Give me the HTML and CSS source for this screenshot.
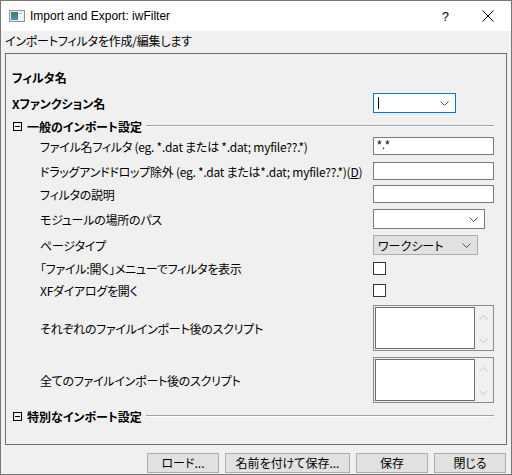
FILE: index.html
```html
<!DOCTYPE html>
<html lang="ja">
<head>
<meta charset="utf-8">
<title>Import and Export: iwFilter</title>
<link rel="stylesheet" href="styles.css">
</head>
<body>
<div class="window">
  <div class="titlebar">
    <svg class="app-icon" width="16" height="12" viewBox="0 0 16 12">
      <defs>
        <linearGradient id="g" x1="0" y1="0" x2="0" y2="1">
          <stop offset="0" stop-color="#2f7f6a"/>
          <stop offset="1" stop-color="#5a8fb5"/>
        </linearGradient>
      </defs>
      <rect x="0.5" y="0.5" width="15" height="11" fill="#e8ecef" stroke="#8c979c"/>
      <rect x="2" y="2" width="7" height="8" fill="url(#g)"/>
      <rect x="10" y="2" width="4" height="8" fill="#f7f9fa"/>
      <rect x="10" y="3" width="3" height="1" fill="#9fb3bf"/>
    </svg>
    <span class="title">Import and Export: iwFilter</span>
    <span class="help">?</span>
    <svg class="close" width="12" height="12" viewBox="0 0 12 12">
      <path d="M0.5 0.5 L11.5 11.5 M11.5 0.5 L0.5 11.5" stroke="#000" stroke-width="1" fill="none"/>
    </svg>
  </div>
  <div class="content">
    <div class="subtitle">インポートフィルタを作成/編集します</div>
    <div class="panel">
      <div class="row r1"><span class="label bold">フィルタ名</span></div>
      <div class="row r2">
        <span class="label bold">Xファンクション名</span>
        <div class="combo focus w82"><span class="caret"></span><svg class="chev" width="9" height="5" viewBox="0 0 9 5"><polyline points="0.5,0.5 4.5,4.5 8.5,0.5" fill="none" stroke="#555"/></svg></div>
      </div>
      <div class="section r3">
        <span class="toggle"></span><span class="sec-title">一般のインポート設定</span><span class="rule"></span>
      </div>
      <div class="row r4">
        <span class="label sub">ファイル名フィルタ (eg. *.dat または *.dat; myfile??.*)</span>
        <div class="input">*.*</div>
      </div>
      <div class="row r5">
        <span class="label sub">ドラッグアンドドロップ除外 (eg. *.dat または*.dat; myfile??.*)(<u>D</u>)</span>
        <div class="input"></div>
      </div>
      <div class="row r6">
        <span class="label sub">フィルタの説明</span>
        <div class="input"></div>
      </div>
      <div class="row r7">
        <span class="label sub">モジュールの場所のパス</span>
        <div class="combo w112"><svg class="chev" width="9" height="5" viewBox="0 0 9 5"><polyline points="0.5,0.5 4.5,4.5 8.5,0.5" fill="none" stroke="#555"/></svg></div>
      </div>
      <div class="row r8">
        <span class="label sub">ページタイプ</span>
        <div class="combo gray w105"><span class="ctext">ワークシート</span><svg class="chev" width="9" height="5" viewBox="0 0 9 5"><polyline points="0.5,0.5 4.5,4.5 8.5,0.5" fill="none" stroke="#555"/></svg></div>
      </div>
      <div class="row r9">
        <span class="label sub">「ファイル:開く」メニューでフィルタを表示</span>
        <span class="check"></span>
      </div>
      <div class="row r10">
        <span class="label sub">XFダイアログを開く</span>
        <span class="check"></span>
      </div>
      <div class="row r11">
        <span class="label sub">それぞれのファイルインポート後のスクリプト</span>
        <div class="textarea">
          <div class="ta-text"></div>
          <div class="ta-scroll">
            <svg width="9" height="5" viewBox="0 0 9 5"><polyline points="0.5,4.5 4.5,0.5 8.5,4.5" fill="none" stroke="#c2c2c2"/></svg>
            <svg width="9" height="5" viewBox="0 0 9 5"><polyline points="0.5,0.5 4.5,4.5 8.5,0.5" fill="none" stroke="#c2c2c2"/></svg>
          </div>
        </div>
      </div>
      <div class="row r12">
        <span class="label sub">全てのファイルインポート後のスクリプト</span>
        <div class="textarea">
          <div class="ta-text"></div>
          <div class="ta-scroll">
            <svg width="9" height="5" viewBox="0 0 9 5"><polyline points="0.5,4.5 4.5,0.5 8.5,4.5" fill="none" stroke="#c2c2c2"/></svg>
            <svg width="9" height="5" viewBox="0 0 9 5"><polyline points="0.5,0.5 4.5,4.5 8.5,0.5" fill="none" stroke="#c2c2c2"/></svg>
          </div>
        </div>
      </div>
      <div class="section r13">
        <span class="toggle"></span><span class="sec-title">特別なインポート設定</span><span class="rule"></span>
      </div>
    </div>
    <div class="buttons">
      <button class="btn w72">ロード...</button>
      <button class="btn w125">名前を付けて保存...</button>
      <button class="btn w72">保存</button>
      <button class="btn w72">閉じる</button>
    </div>
  </div>
</div>
</body>
</html>
```
FILE: styles.css
```css
* { box-sizing: border-box; }
html, body { margin: 0; padding: 0; }
body {
  width: 512px;
  height: 475px;
  font-family: "Noto Sans CJK JP", sans-serif;
  font-size: 12px;
  color: #000;
  background: #fff;
  overflow: hidden;
}
.window {
  width: 512px;
  height: 475px;
  border: 1px solid #767676;
  display: flex;
  flex-direction: column;
  background: #f0f0f0;
}
.titlebar {
  flex: none;
  height: 30px;
  background: #fff;
  display: flex;
  align-items: center;
  padding-left: 8px;
  padding-right: 17px;
}
.app-icon { flex: none; margin-right: 5px; }
.title {
  font-family: "Liberation Sans", sans-serif;
  font-size: 12px;
  color: #000;
}
.help {
  margin-left: auto;
  margin-right: 33px;
  font-family: "Liberation Sans", sans-serif;
  font-size: 13px;
}
.close { flex: none; }
.content {
  flex: 1;
  display: flex;
  flex-direction: column;
}
.subtitle {
  height: 22px;
  line-height: 20px;
  padding-left: 4px;
  font-feature-settings: "palt";
  letter-spacing: -0.2px;
}
.panel {
  margin: 0 4px;
  height: 392px;
  border: 1px solid #6f6f6f;
  display: flex;
  flex-direction: column;
}
.row {
  display: flex;
  align-items: center;
  padding-left: 6px;
  flex: none;
}
.label {
  width: 361px;
  flex: none;
  white-space: nowrap;
  font-feature-settings: "palt";
}
.label.sub { padding-left: 28px; letter-spacing: -0.25px; }
.bold { font-weight: bold; }
.r1 { margin-top: 13px; height: 20px; }
.r2 { margin-top: 6px; height: 20px; }
.r3 { margin-top: 5px; height: 16px; }
.r4 { margin-top: 3px; height: 18px; }
.r5 { margin-top: 7px; height: 18px; }
.r6 { margin-top: 5px; height: 18px; }
.r7 { margin-top: 6px; height: 20px; }
.r8 { margin-top: 6px; height: 20px; }
.r9 { margin-top: 7px; height: 13px; }
.r10 { margin-top: 9px; height: 13px; }
.r11 { margin-top: 8px; height: 46px; }
.r12 { margin-top: 6px; height: 46px; }
.r13 { margin-top: 5px; height: 16px; }
.section {
  display: flex;
  align-items: center;
  padding: 0 12px 0 7px;
  flex: none;
}
.toggle {
  position: relative;
  width: 9px;
  height: 9px;
  border: 1px solid #000;
  flex: none;
}
.toggle::after {
  content: "";
  position: absolute;
  left: 1px;
  top: 3px;
  width: 5px;
  height: 1px;
  background: #000;
}
.sec-title {
  margin-left: 5px;
  font-weight: bold;
  font-feature-settings: "palt";
}
.rule {
  flex: 1;
  margin-left: 4px;
  height: 2px;
  border-top: 1px solid #a0a0a0;
  border-bottom: 1px solid #fff;
}
.input {
  width: 121px;
  height: 18px;
  background: #fff;
  border: 1px solid #7a7a7a;
  padding-left: 3px;
  line-height: 15px;
  font-family: "Liberation Sans", sans-serif;
  font-size: 12px;
}
.combo {
  position: relative;
  height: 20px;
  background: #fff;
  border: 1px solid #7a7a7a;
  display: flex;
  align-items: center;
  padding-left: 4px;
}
.combo.focus { border-color: #0078d7; }
.combo.gray { background: #e1e1e1; border-color: #adadad; }
.w82 { width: 83px; }
.w112 { width: 112px; }
.w105 { width: 105px; }
.caret {
  width: 1px;
  height: 12px;
  background: #000;
}
.ctext { font-feature-settings: "palt"; }
.chev { margin-left: auto; margin-right: 6px; flex: none; }
.check {
  width: 13px;
  height: 13px;
  background: #fff;
  border: 1px solid #333;
  flex: none;
}
.textarea {
  width: 121px;
  height: 46px;
  border: 1px solid #8a8a8a;
  padding: 1px;
  display: flex;
  background: #f0f0f0;
}
.ta-text {
  flex: 1;
  background: #fff;
  border: 1px solid #6d6d6d;
}
.ta-scroll {
  width: 17px;
  flex: none;
  display: flex;
  flex-direction: column;
  align-items: center;
  justify-content: space-between;
  padding: 8px 0 6px;
}
.ta-scroll svg { display: block; }
.buttons {
  margin-top: 8px;
  display: flex;
  justify-content: flex-end;
  gap: 6px;
  padding-right: 5px;
}
.btn {
  height: 20px;
  background: #e1e1e1;
  border: 1px solid #adadad;
  font-family: "Noto Sans CJK JP", sans-serif;
  font-size: 12px;
  color: #000;
  padding: 0;
  line-height: 16px;
  font-feature-settings: "palt";
}
.w72 { width: 72px; }
.w125 { width: 125px; }
```
